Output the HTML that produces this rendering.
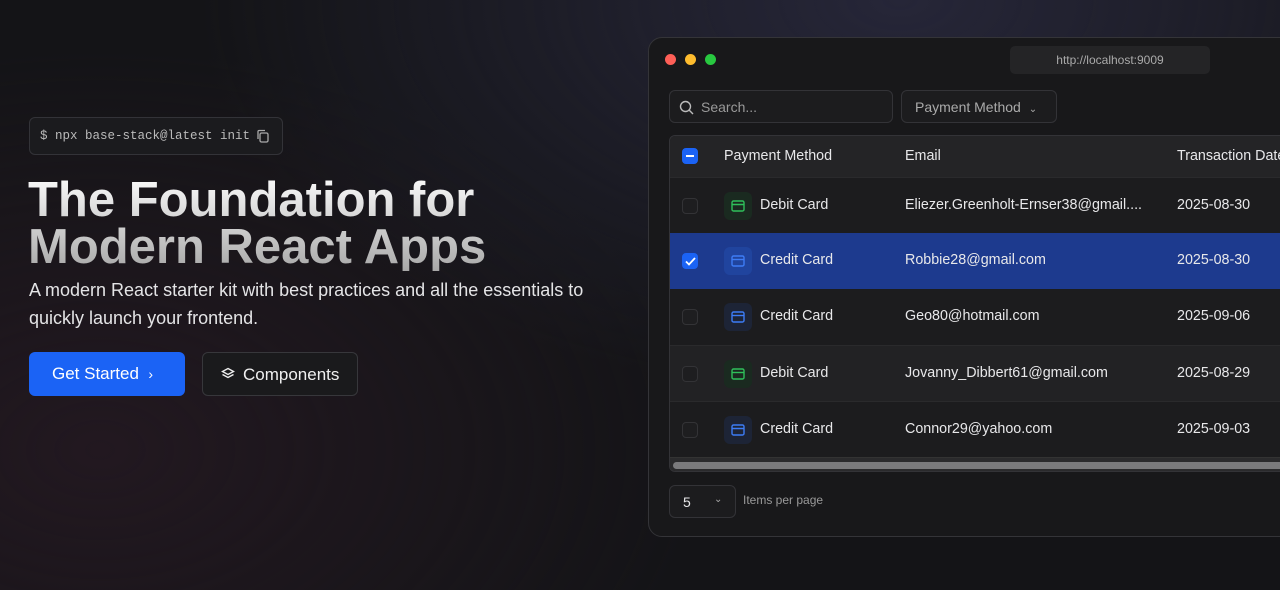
<!DOCTYPE html>
<html><head><meta charset="utf-8"><style>
*{box-sizing:border-box;margin:0;padding:0}
body{width:1280px;height:590px;overflow:hidden;font-family:"Liberation Sans",sans-serif;color:#e8e8ea;
background:radial-gradient(ellipse 700px 400px at 900px 0px,#262638 0%,rgba(30,30,44,0) 100%),radial-gradient(ellipse 600px 400px at 100px 450px,#221820 0%,rgba(34,24,32,0) 100%),#141417;position:relative}
.cmd{position:absolute;left:29px;top:117px;width:254px;height:38px;border:1px solid #333338;border-radius:6px;background:#1b1b1e;font-family:"Liberation Mono",monospace;font-size:12.5px;color:#bbb;padding:11px 0 0 10px}
.cmd svg{position:absolute;right:12px;top:11px}
h1{position:absolute;left:28px;top:177px;font-size:49px;line-height:47px;font-weight:bold;letter-spacing:0;background:linear-gradient(#fafafa,#a8a8a8);-webkit-background-clip:text;color:transparent}
.sub{position:absolute;left:29px;top:276px;width:605px;font-size:18px;line-height:28px;color:#e4e4e6}
.b1{position:absolute;left:29px;top:352px;width:156px;height:44px;border-radius:6px;background:#1b63f5;color:#fff;font-size:17px;padding:12px 0 0 23px}
.b2{position:absolute;left:202px;top:352px;width:156px;height:44px;border-radius:6px;border:1px solid #37373b;background:#1a1a1c;color:#f0f0f0;font-size:17px;padding:12px 0 0 40px}
.b2 svg{position:absolute;left:18px;top:14px}
.win{position:absolute;left:648px;top:37px;width:660px;height:500px;border:1px solid #343438;border-radius:14px;background:#18181a;overflow:hidden}
.dot{position:absolute;top:16px;width:11px;height:11px;border-radius:50%}
.url{position:absolute;left:361px;top:8px;width:200px;height:28px;border-radius:5px;background:#242426;font-size:12px;color:#aaa;text-align:center;line-height:28px}
.srch{position:absolute;left:20px;top:52px;width:224px;height:33px;border:1px solid #333337;border-radius:6px;background:#1c1c1e;font-size:14px;color:#999;padding:8px 0 0 31px}
.srch svg{position:absolute;left:9px;top:9px}
.pm{position:absolute;left:252px;top:52px;width:156px;height:33px;border:1px solid #333337;border-radius:6px;background:#1c1c1e;font-size:14px;color:#aaa;padding:8px 0 0 13px}
.tbl{position:absolute;left:20px;top:97px;width:660px;height:337px;border:1px solid #333337;border-radius:6px;overflow:hidden;background:#1c1c1e}
.row{position:absolute;left:0;width:660px;height:56px;font-size:14.3px;border-top:1px solid #2a2a2c}
.row span{position:absolute;top:19px}
.cb{position:absolute;left:12px;top:20px;width:16px;height:16px;border-radius:4px;border:1px solid #333336;background:#1e1e20}
.ic{position:absolute;left:54px;top:14px;width:28px;height:28px;border-radius:6px}
.ic svg{position:absolute;left:7px;top:8px}
.c1{left:90px}.c2{left:235px}.c3{left:507px}
.foot{position:absolute;left:20px;top:447px;width:67px;height:33px;border:1px solid #333337;border-radius:6px;background:#1c1c1e;font-size:14px;padding:8px 0 0 13px}
</style></head><body>
<div class="cmd">$ npx base-stack@latest init<svg width="14" height="14" viewBox="0 0 14 14" fill="none" stroke="#aaa" stroke-width="1.3"><rect x="4" y="4" width="8" height="9" rx="1.5"/><path d="M2 10V2.5A1 1 0 0 1 3 1.5H9"/></svg></div>
<h1>The Foundation for<br>Modern React Apps</h1>
<div class="sub">A modern React starter kit with best practices and all the essentials to quickly launch your frontend.</div>
<div class="b1">Get Started &nbsp;<span style="font-size:14px">›</span></div>
<div class="b2"><svg width="14" height="14" viewBox="0 0 14 14" fill="none" stroke="#eee" stroke-width="1.4"><path d="M7 1.5L12.5 4.5L7 7.5L1.5 4.5Z"/><path d="M1.5 7.5L7 10.5L12.5 7.5"/></svg>Components</div>
<div class="win">
<div class="dot" style="left:16px;background:#fe5f57"></div><div class="dot" style="left:36px;background:#febc2e"></div><div class="dot" style="left:56px;background:#28c840"></div>
<div class="url">http://localhost:9009</div>
<div class="srch"><svg width="15" height="15" viewBox="0 0 15 15" fill="none" stroke="#bbb" stroke-width="1.4"><circle cx="6.5" cy="6.5" r="5"/><path d="M10.3 10.3L14 14"/></svg>Search...</div>
<div class="pm">Payment Method <span style="font-size:10px;margin-left:4px">⌄</span></div>
<div class="tbl">
<div class="row" style="top:0;height:41px;background:#242426;border:0"><div class="cb" style="top:12px;background:#1b63f5;border-color:#1b63f5"><div style="position:absolute;left:3px;top:6px;width:8px;height:2px;background:#fff"></div></div><span style="top:12px;left:54px">Payment Method</span><span class="c2" style="top:12px">Email</span><span class="c3" style="top:12px">Transaction Date</span></div>
<div class="row" style="top:41px"><div class="cb"></div><div class="ic" style="background:#1a2a20"><svg width="14" height="12" viewBox="0 0 14 12" fill="none" stroke="#2fbf5a" stroke-width="1.4"><rect x="1" y="1" width="12" height="10" rx="1.5"/><path d="M1 4.5H13"/></svg></div><span class="c1">Debit Card</span><span class="c2">Eliezer.Greenholt-Ernser38@gmail....</span><span class="c3">2025-08-30</span></div>
<div class="row" style="top:97px;background:#1d3a8e;border:0"><div class="cb" style="background:#1b63f5;border-color:#1b63f5"><svg style="position:absolute;left:2px;top:3px" width="11" height="9" viewBox="0 0 11 9" fill="none" stroke="#fff" stroke-width="1.8"><path d="M1 4.5L4 7.5L10 1"/></svg></div><div class="ic" style="background:#20449e"><svg width="14" height="12" viewBox="0 0 14 12" fill="none" stroke="#3d7cf5" stroke-width="1.4"><rect x="1" y="1" width="12" height="10" rx="1.5"/><path d="M1 4.5H13"/></svg></div><span class="c1">Credit Card</span><span class="c2">Robbie28@gmail.com</span><span class="c3">2025-08-30</span></div>
<div class="row" style="top:153px;border:0"><div class="cb"></div><div class="ic" style="background:#1d2436"><svg width="14" height="12" viewBox="0 0 14 12" fill="none" stroke="#3d7cf5" stroke-width="1.4"><rect x="1" y="1" width="12" height="10" rx="1.5"/><path d="M1 4.5H13"/></svg></div><span class="c1">Credit Card</span><span class="c2">Geo80@hotmail.com</span><span class="c3">2025-09-06</span></div>
<div class="row" style="top:209px;background:#222224"><div class="cb"></div><div class="ic" style="background:#1a2a20"><svg width="14" height="12" viewBox="0 0 14 12" fill="none" stroke="#2fbf5a" stroke-width="1.4"><rect x="1" y="1" width="12" height="10" rx="1.5"/><path d="M1 4.5H13"/></svg></div><span class="c1">Debit Card</span><span class="c2">Jovanny_Dibbert61@gmail.com</span><span class="c3">2025-08-29</span></div>
<div class="row" style="top:265px"><div class="cb"></div><div class="ic" style="background:#1d2436"><svg width="14" height="12" viewBox="0 0 14 12" fill="none" stroke="#3d7cf5" stroke-width="1.4"><rect x="1" y="1" width="12" height="10" rx="1.5"/><path d="M1 4.5H13"/></svg></div><span class="c1">Credit Card</span><span class="c2">Connor29@yahoo.com</span><span class="c3">2025-09-03</span></div>
<div style="position:absolute;left:0;top:321px;width:660px;height:16px;background:#2a2a2c;border-top:1px solid #333"><div style="position:absolute;left:3px;top:4px;width:657px;height:7px;border-radius:4px;background:#7a7a7c"></div></div>
</div>
<div class="foot">5<span style="position:absolute;left:44px;top:8px;font-size:10px;color:#aaa">⌄</span></div>
<div style="position:absolute;left:94px;top:455px;font-size:12px;color:#999">Items per page</div>
</div>
</body></html>
